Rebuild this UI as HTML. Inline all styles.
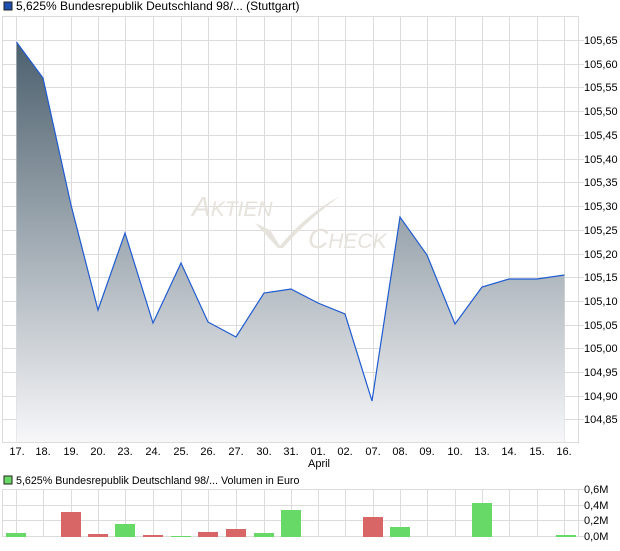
<!DOCTYPE html>
<html><head><style>
body{margin:0;background:#fff;width:620px;height:546px;overflow:hidden}
svg text{font-family:"Liberation Sans",sans-serif;font-size:11px;fill:#000}
</style></head><body>
<svg width="620" height="546" viewBox="0 0 620 546">
<defs>
<linearGradient id="g" x1="0" y1="40" x2="0" y2="442" gradientUnits="userSpaceOnUse">
<stop offset="0" stop-color="#4b5f6d"/>
<stop offset="1" stop-color="#f7f7f9"/>
</linearGradient>
</defs>
<rect x="4" y="2" width="8" height="8" fill="#1f4fb0" stroke="#222" stroke-width="1"/>
<text x="16" y="10" style="font-size:12px">5,625% Bundesrepublik Deutschland 98/... (Stuttgart)</text>
<g stroke="#dcdcdc" stroke-width="1" fill="none">
<path d="M2.5 16.5H578.5V442.5H2.5Z"/>
<path d="M16.5 17V442M43.5 17V442M71.5 17V442M98.5 17V442M125.5 17V442M153.5 17V442M181.5 17V442M208.5 17V442M236.5 17V442M264.5 17V442M291.5 17V442M318.5 17V442M345.5 17V442M373.5 17V442M400.5 17V442M427.5 17V442M455.5 17V442M482.5 17V442M509.5 17V442M537.5 17V442M564.5 17V442"/>
<path d="M3 40.5H584M3 64.5H584M3 87.5H584M3 111.5H584M3 135.5H584M3 159.5H584M3 182.5H584M3 206.5H584M3 230.5H584M3 254.5H584M3 277.5H584M3 301.5H584M3 325.5H584M3 348.5H584M3 372.5H584M3 396.5H584M3 419.5H584"/>
</g>
<text x="192" y="216" style="fill:#e6e2dc;font-size:28px;font-style:italic">A<tspan style="font-size:21px">KTIEN</tspan></text>
<text x="308" y="248" style="fill:#e6e2dc;font-size:28px;font-style:italic">C<tspan style="font-size:21px">HECK</tspan></text>
<path d="M255 223L270 230L280 246Q305 215 340 196Q305 222 283 248L278 248Z" fill="#e6e2dc"/>
<path d="M16.5 42L43 78L71 205L98 310L125 233L153 323L181 263L208 322L236 337L264 293L291 289L318 303L345 314L372 401L400 217L427 255L455 324L482 287L509 279L537 279L564.5 275V442H16.5Z" fill="url(#g)"/>
<path d="M16.5 42L43 78L71 205L98 310L125 233L153 323L181 263L208 322L236 337L264 293L291 289L318 303L345 314L372 401L400 217L427 255L455 324L482 287L509 279L537 279L564.5 275" fill="none" stroke="#1f5bd0" stroke-width="1.2"/>
<path d="M578.5 16V442.5M578 40.5h6M578 64.5h6M578 87.5h6M578 111.5h6M578 135.5h6M578 159.5h6M578 182.5h6M578 206.5h6M578 230.5h6M578 254.5h6M578 277.5h6M578 301.5h6M578 325.5h6M578 348.5h6M578 372.5h6M578 396.5h6M578 419.5h6" stroke="#dcdcdc" fill="none"/>
<g>
<text x="584" y="44">105,65</text><text x="584" y="68">105,60</text><text x="584" y="91">105,55</text><text x="584" y="115">105,50</text><text x="584" y="139">105,45</text><text x="584" y="163">105,40</text><text x="584" y="186">105,35</text><text x="584" y="210">105,30</text><text x="584" y="234">105,25</text><text x="584" y="258">105,20</text><text x="584" y="281">105,15</text><text x="584" y="305">105,10</text><text x="584" y="329">105,05</text><text x="584" y="352">105,00</text><text x="584" y="376">104,95</text><text x="584" y="400">104,90</text><text x="584" y="423">104,85</text>
</g>
<g text-anchor="middle">
<text x="17" y="455">17.</text><text x="43" y="455">18.</text><text x="71" y="455">19.</text><text x="98" y="455">20.</text><text x="125" y="455">23.</text><text x="153" y="455">24.</text><text x="181" y="455">25.</text><text x="208" y="455">26.</text><text x="236" y="455">27.</text><text x="264" y="455">30.</text><text x="291" y="455">31.</text><text x="318" y="455">01.</text><text x="345" y="455">02.</text><text x="373" y="455">07.</text><text x="400" y="455">08.</text><text x="427" y="455">09.</text><text x="455" y="455">10.</text><text x="482" y="455">13.</text><text x="509" y="455">14.</text><text x="537" y="455">15.</text><text x="564" y="455">16.</text>
<text x="319" y="467">April</text>
</g>
<rect x="4" y="476" width="8" height="8" fill="#66d966" stroke="#222" stroke-width="1"/>
<text x="16" y="484" style="font-size:10.7px">5,625% Bundesrepublik Deutschland 98/... Volumen in Euro</text>
<g stroke="#dcdcdc" fill="none">
<path d="M2.5 489.5H578.5V536.5H2.5Z"/>
<path d="M16.5 490V536M43.5 490V536M71.5 490V536M98.5 490V536M125.5 490V536M153.5 490V536M181.5 490V536M208.5 490V536M236.5 490V536M264.5 490V536M291.5 490V536M318.5 490V536M345.5 490V536M373.5 490V536M400.5 490V536M427.5 490V536M455.5 490V536M482.5 490V536M509.5 490V536M537.5 490V536M564.5 490V536"/>
<path d="M3 505.5H584M3 520.5H584M578 489.5h6M578 536.5h6"/>
</g>
<g>
<rect x="6" y="533" width="20" height="4" fill="#66d966"/>
<rect x="61" y="512" width="20" height="25" fill="#d96666"/>
<rect x="88" y="534" width="20" height="3" fill="#d96666"/>
<rect x="115" y="524" width="20" height="13" fill="#66d966"/>
<rect x="143" y="535" width="20" height="2" fill="#d96666"/>
<rect x="171" y="536" width="20" height="1" fill="#66d966"/>
<rect x="198" y="532" width="20" height="5" fill="#d96666"/>
<rect x="226" y="529" width="20" height="8" fill="#d96666"/>
<rect x="254" y="533" width="20" height="4" fill="#66d966"/>
<rect x="281" y="510" width="20" height="27" fill="#66d966"/>
<rect x="363" y="517" width="20" height="20" fill="#d96666"/>
<rect x="390" y="527" width="20" height="10" fill="#66d966"/>
<rect x="472" y="503" width="20" height="34" fill="#66d966"/>
<rect x="556" y="535" width="20" height="2" fill="#66d966"/>
</g>
<text x="584" y="493">0,6M</text><text x="584" y="509">0,4M</text><text x="584" y="524">0,2M</text><text x="584" y="540">0,0M</text>
</svg>
</body></html>
